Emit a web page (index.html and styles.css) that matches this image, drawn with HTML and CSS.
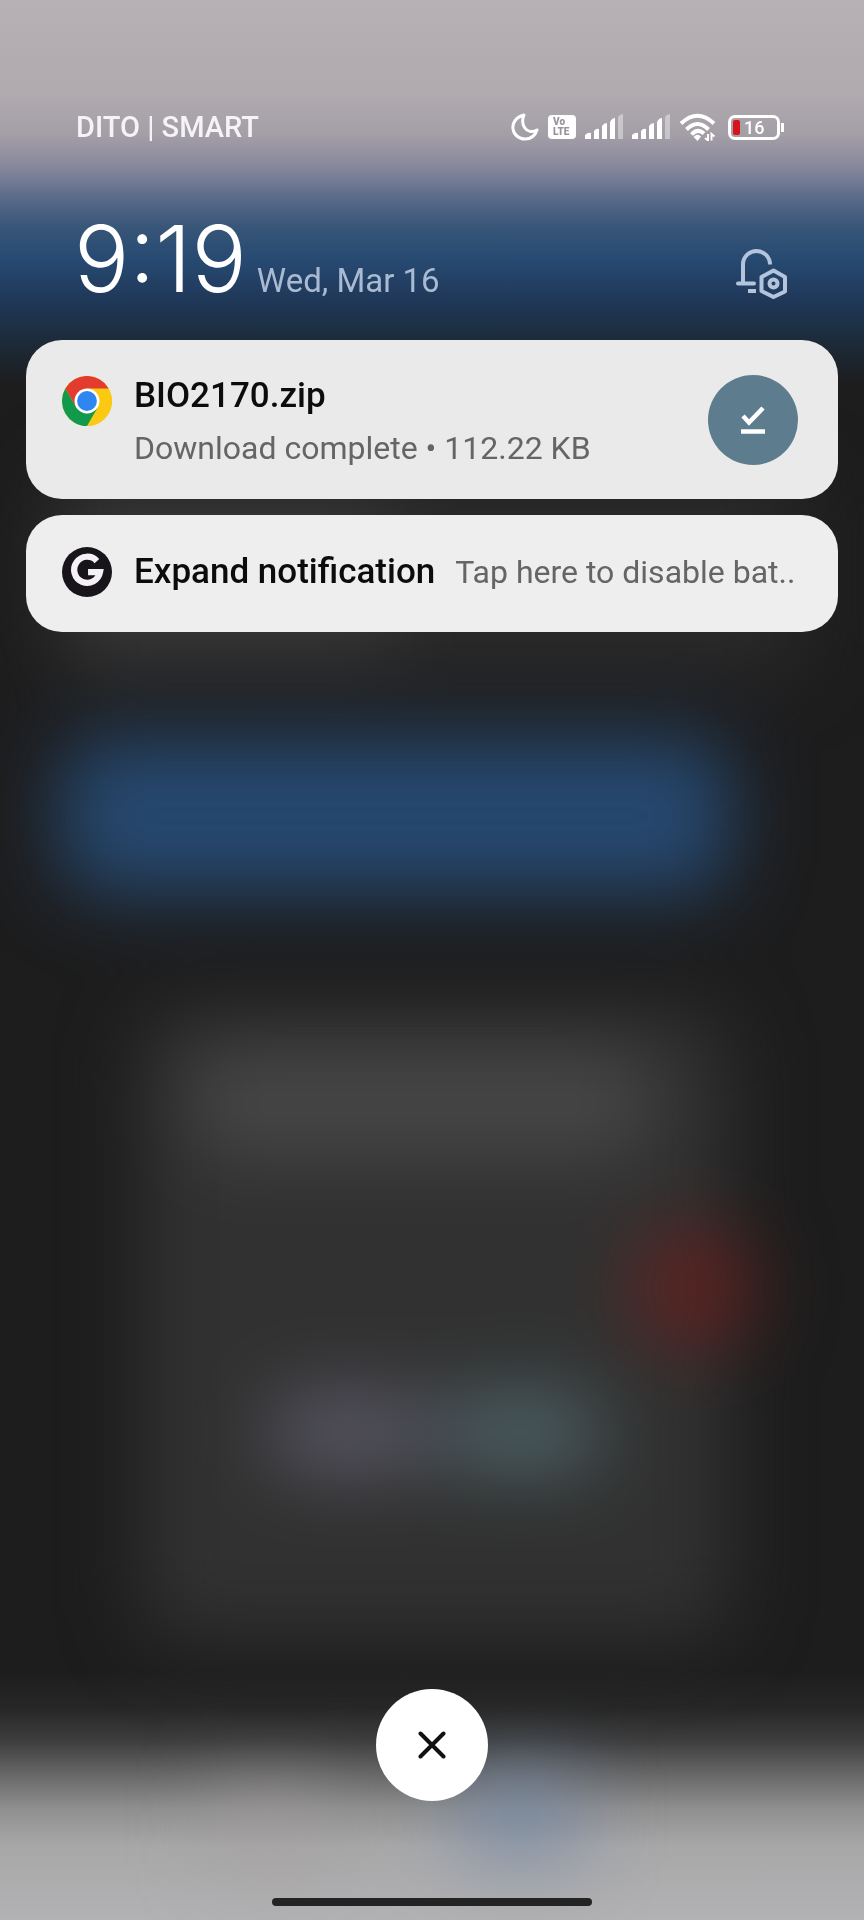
FILE: index.html
```html
<!DOCTYPE html>
<html lang="en">
<head>
    <meta charset="UTF-8">
    <meta name="viewport" content="width=device-width, initial-scale=1.0">
    <title>Notifications</title>
    <link rel="stylesheet" href="styles.css">
</head>
<body>
    <!-- blurred home screen behind the shade -->
    <svg class="backdrop" viewBox="0 0 864 1920" preserveAspectRatio="none" aria-hidden="true">
        <defs>
            <linearGradient id="sky" x1="0" y1="0" x2="0" y2="1">
                <stop offset="0" stop-color="#b7b1b6"/>
                <stop offset="0.05" stop-color="#b0aaaf"/>
                <stop offset="0.07" stop-color="#a49fa7"/>
                <stop offset="0.088" stop-color="#85869b"/>
                <stop offset="0.102" stop-color="#5d6c8a"/>
                <stop offset="0.118" stop-color="#385678"/>
                <stop offset="0.135" stop-color="#274a72"/>
                <stop offset="0.155" stop-color="#20395a"/>
                <stop offset="0.175" stop-color="#1c2d3d"/>
                <stop offset="0.2" stop-color="#1d1d1e"/>
                <stop offset="0.87" stop-color="#1d1d1d"/>
                <stop offset="0.89" stop-color="#272727"/>
                <stop offset="0.907" stop-color="#3e3e3f"/>
                <stop offset="0.924" stop-color="#676767"/>
                <stop offset="0.942" stop-color="#8f8f8f"/>
                <stop offset="0.962" stop-color="#a8a8a9"/>
                <stop offset="1" stop-color="#b2b1b3"/>
            </linearGradient>
            <filter id="blur" x="-50%" y="-50%" width="200%" height="200%" color-interpolation-filters="sRGB">
                <feGaussianBlur stdDeviation="38"/>
            </filter>
        </defs>
        <rect width="864" height="1920" fill="url(#sky)"/>
        <g filter="url(#blur)">
            <rect x="60" y="480" width="740" height="190" fill="#2b2b2c"/>
            <rect x="60" y="490" width="330" height="170" fill="#383838"/>
            <rect x="60" y="738" width="670" height="156" rx="40" fill="#26486f"/>
            <rect x="140" y="1010" width="590" height="630" rx="40" fill="#313131"/>
            <rect x="190" y="1046" width="460" height="110" rx="40" fill="#464646"/>
            <circle cx="694" cy="1288" r="64" fill="#5a2422"/>
            <rect x="270" y="1390" width="160" height="84" rx="30" fill="#565561"/>
            <rect x="440" y="1390" width="160" height="84" rx="30" fill="#4b5e62"/>
            <rect x="460" y="1770" width="120" height="90" fill="#6f86a5" opacity="0.7"/>
            <rect x="210" y="1780" width="120" height="90" fill="#a39a9b" opacity="0.4"/>
        </g>
    </svg>

    <div class="shade">
        <header class="status-bar">
            <span class="carrier">DITO | SMART</span>
            <div class="status-icons">
                <svg width="28" height="28" viewBox="0 0 28 28" role="img" aria-label="Do not disturb">
                    <path d="M13 2C5 4 1 10 2 16c1 6 6 10 12 10 5.500 0 10-3 12-9-5 3-10 1.500-12.500-2.500C11.200 10.700 11.200 6 13 2Z" fill="none" stroke="#fff" stroke-width="3" stroke-linejoin="round"/>
                </svg>
                <span class="volte"><span>Vo</span><span>LTE</span></span>
                <svg width="38" height="26" viewBox="0 0 38 26" role="img" aria-label="Signal, SIM 1">
                    <g fill="#fff">
                        <path d="M0 21q3-3 6-2v6H0zM9 17q2-3 5-2v10H9zM17 12q2-3 5-3v16h-5zM25 8q2-4 5-4v21h-5z"/>
                        <path d="M33 3q2-3 5-3v25h-5z" opacity="0.400"/>
                    </g>
                </svg>
                <svg width="38" height="26" viewBox="0 0 38 26" role="img" aria-label="Signal, SIM 2">
                    <g fill="#fff">
                        <path d="M0 21q3-3 6-2v6H0zM9 17q2-3 5-2v10H9zM17 12q2-3 5-3v16h-5zM25 8q2-4 5-4v21h-5z"/>
                        <path d="M33 3q2-3 5-3v25h-5z" opacity="0.400"/>
                    </g>
                </svg>
                <svg width="38" height="28" viewBox="0 0 38 28" role="img" aria-label="Wi-Fi">
                    <g fill="none" stroke="#fff" stroke-width="4">
                        <path d="M2 10.500Q18.500-5 35 10.500"/>
                        <path d="M7.500 16.500Q18.500 5.500 29.500 16.500"/>
                        <path d="M12.500 21.500Q18.500 15 25 20.500"/>
                    </g>
                    <path d="M14.500 24q4-4 7.500-.5L18.500 28z" fill="#fff"/>
                    <path d="M29 21v6.500l-3-2.500M32.500 27.500V21l3 2.500" fill="none" stroke="#fff" stroke-width="2"/>
                </svg>
                <span class="battery"><span class="battery-level"></span>16</span>
            </div>
        </header>

        <div class="clock-row">
            <time class="clock">9:19</time>
            <span class="date">Wed, Mar 16</span>
            <button class="settings" aria-label="Notification settings">
                <svg width="52" height="50" viewBox="0 0 52 50" fill="none" stroke="#b3c4dc" stroke-width="4">
                    <path d="M7 33V15.500a13.500 13.500 0 0 1 27 0" />
                    <path d="M2 34.500h16" stroke-linecap="round"/>
                    <path d="M12 42h8" />
                    <path d="M37.500 21.500 49 28v14.500L37.500 48 25.500 42V28z" stroke-linejoin="round"/>
                    <circle cx="37.500" cy="34.500" r="4"/>
                </svg>
            </button>
        </div>

        <main class="notifications">
            <article class="card">
                <svg class="app-icon" viewBox="0 0 48 48" role="img" aria-label="Chrome">
                    <circle cx="24" cy="24" r="24" fill="#fbc911"/>
                    <path d="M24 24 44.800 12A24 24 0 0 0 3.200 12L13.600 30z" fill="#e33b2e"/>
                    <path d="M24 12h20.800A24 24 0 0 1 24 48l10.400-18z" fill="#fbc911"/>
                    <path d="M3.200 12A24 24 0 0 0 24 48l10.400-18-10.400 6-10.400-6z" fill="#119a4c"/>
                    <circle cx="24" cy="24" r="12" fill="#fff"/>
                    <circle cx="24" cy="24" r="9.500" fill="#2f86f0"/>
                </svg>
                <div class="card-text">
                    <h2>BIO2170.zip</h2>
                    <p>Download complete • 112.22 KB</p>
                </div>
                <span class="done-badge">
                    <svg width="24" height="28" viewBox="0 0 24 28" fill="none" stroke="#fff" stroke-width="4.500" role="img" aria-label="Done">
                        <path d="M2 10l6 6.500L22 2"/>
                        <path d="M0 25.500h24"/>
                    </svg>
                </span>
            </article>

            <article class="card card-compact">
                <svg class="app-icon" viewBox="0 0 48 48" role="img" aria-label="G">
                    <circle cx="24" cy="24" r="24" fill="#17151a"/>
                    <path d="M33.500 13.500A12.500 12.500 0 1 0 36.500 24H25" fill="none" stroke="#f5f0f5" stroke-width="6"/>
                </svg>
                <div class="card-text card-line">
                    <h2>Expand notification</h2>
                    <p>Tap here to disable bat..</p>
                </div>
            </article>
        </main>

        <footer class="bottom">
            <button class="clear" aria-label="Clear all notifications">
                <svg width="28" height="28" viewBox="0 0 28 28" fill="none" stroke="#111" stroke-width="4" stroke-linecap="round">
                    <path d="M2.500 2.500l23 23M25.500 2.500l-23 23"/>
                </svg>
            </button>
            <div class="home-bar"></div>
        </footer>
    </div>
</body>
</html>
```
FILE: styles.css
```css
* {
    box-sizing: border-box;
}
body {
    margin: 0;
    font-family: Roboto, "Liberation Sans", sans-serif;
    background-color: #1d1d1d;
}
h2, p {
    margin: 0;
}
button {
    padding: 0;
    border: none;
    background: none;
    cursor: pointer;
}
svg {
    display: block;
}
.backdrop {
    position: fixed;
    inset: 0;
    width: 100%;
    height: 100%;
    z-index: -1;
}
.shade {
    display: flex;
    flex-direction: column;
    min-height: 100vh;
    padding: 108px 26px 14px;
}
.status-bar {
    display: flex;
    align-items: center;
    justify-content: space-between;
    height: 38px;
    padding: 0 54px 0 50px;
    color: #fff;
}
.carrier {
    font-size: 29px;
    font-weight: 500;
    color: #f6f3f6;
}
.status-icons {
    display: flex;
    align-items: center;
    gap: 9px;
}
.volte {
    display: flex;
    flex-direction: column;
    width: 28px;
    height: 24px;
    padding: 2px 0 0 5px;
    border-radius: 4px;
    background: #fff;
    color: #99949c;
    font-size: 10px;
    font-weight: 900;
    line-height: 10px;
}
.battery {
    position: relative;
    display: flex;
    align-items: center;
    gap: 4px;
    width: 52px;
    height: 25px;
    margin: 0 4px 0 2px;
    padding-left: 2px;
    border: 3px solid #fff;
    border-radius: 7px;
    font-size: 18px;
    font-weight: 500;
}
.battery::after {
    content: "";
    position: absolute;
    left: 50px;
    top: 5px;
    width: 3px;
    height: 9px;
    background: #fff;
}
.battery-level {
    width: 7px;
    height: 15px;
    border-radius: 2px;
    background: #d5141c;
}
.clock-row {
    display: flex;
    align-items: baseline;
    height: 194px;
    padding: 53px 50px 0 48px;
}
.clock {
    font-family: Inter, Lato, sans-serif;
    font-size: 92px;
    font-weight: 300;
    line-height: 120px;
    color: #fff;
}
.date {
    margin-left: 10px;
    font-size: 33px;
    color: #a9bad3;
}
.settings {
    align-self: flex-start;
    margin: 50px 0 0 auto;
}
.notifications {
    display: flex;
    flex-direction: column;
    gap: 16px;
}
.card {
    display: flex;
    align-items: center;
    min-height: 159px;
    padding: 0 40px 0 36px;
    border-radius: 36px;
    background: #eaeaea;
}
.card-compact {
    min-height: 117px;
    padding-bottom: 4px;
    background: #eeeeee;
}
.app-icon {
    flex: none;
    width: 50px;
    height: 50px;
    margin-right: 22px;
}
.card:first-child .app-icon {
    align-self: flex-start;
    margin-top: 36px;
}
.card-text {
    flex: 1;
    min-width: 0;
}
.card:first-child .card-text {
    padding-top: 4px;
}
.card-line {
    display: flex;
    align-items: baseline;
    gap: 20px;
    white-space: nowrap;
}
.card h2 {
    font-size: 35px;
    font-weight: 500;
    line-height: 52px;
    color: #0c0c0c;
}
.card p {
    font-size: 32px;
    line-height: 52px;
    color: #656565;
}
.done-badge {
    display: flex;
    align-items: center;
    justify-content: center;
    width: 90px;
    height: 90px;
    border-radius: 50%;
    background: #5d7d8f;
}
.bottom {
    display: flex;
    flex-direction: column;
    align-items: center;
    gap: 97px;
    margin-top: auto;
}
.clear {
    display: flex;
    align-items: center;
    justify-content: center;
    width: 112px;
    height: 112px;
    border-radius: 50%;
    background: #fff;
}
.home-bar {
    width: 320px;
    height: 8px;
    border-radius: 4px;
    background: #232323;
}
```
